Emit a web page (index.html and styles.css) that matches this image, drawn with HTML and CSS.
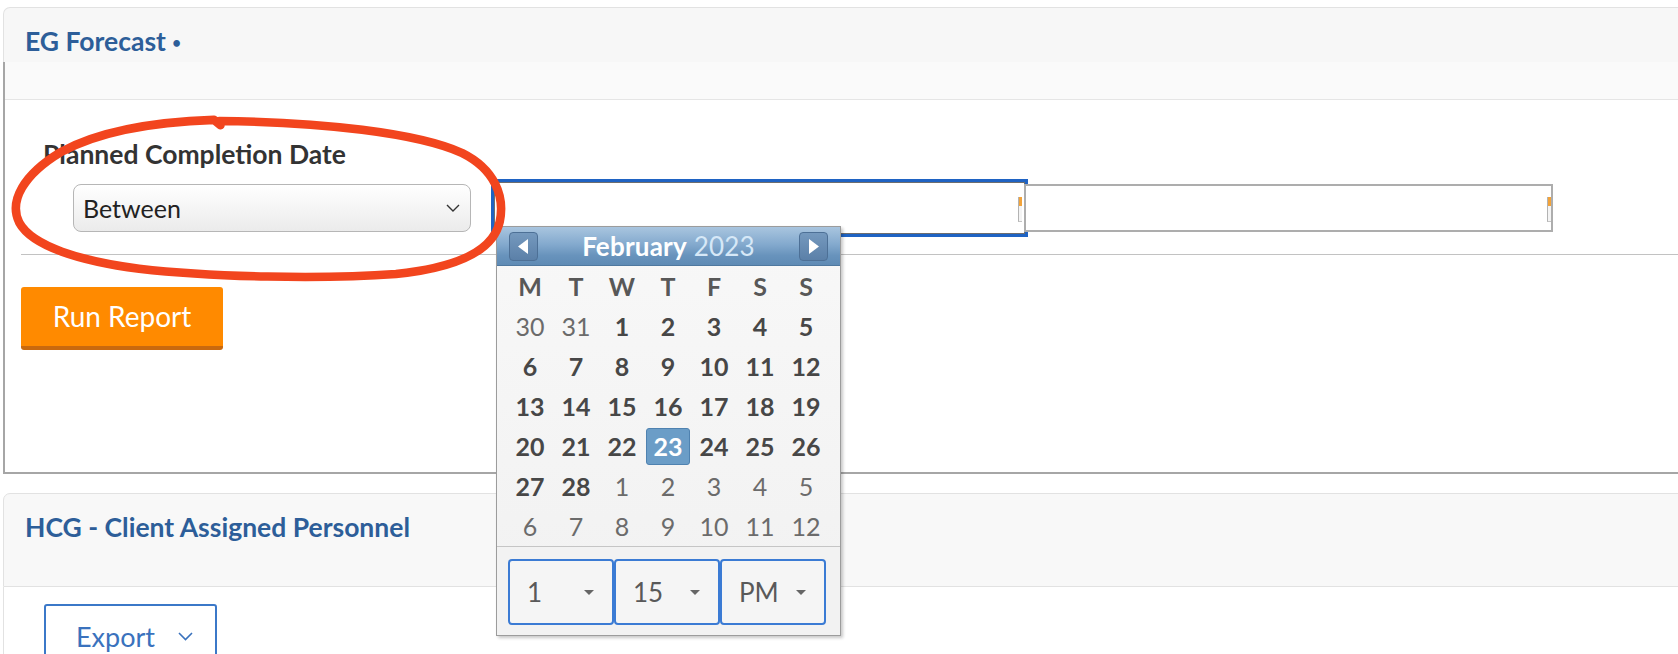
FILE: index.html
```html
<!DOCTYPE html>
<html lang="en">
<head>
<meta charset="utf-8">
<title>EG Forecast</title>
<link rel="stylesheet" href="styles.css">
</head>
<body>
<div class="page">
  <section class="panel">
    <header class="panel-head head-eg"><h2 class="panel-title">EG Forecast <span class="dot">•</span></h2></header>
    <div class="report-body">
      <div class="subbar"></div>
      <div class="filter">
        <div class="filter-label">Planned Completion Date</div>
        <div class="filter-row">
          <div class="select">
            <span>Between</span>
            <svg class="chev" width="14" height="8" viewBox="0 0 14 8"><path d="M1 1 L7 7 L13 1" fill="none" stroke="#333" stroke-width="1.4"/></svg>
          </div>
          <div class="date-wrap">
            <div class="date-input focused"><span class="cal-icon"></span></div>
            <div class="datepicker">
              <div class="dp-head">
                <span class="dp-nav"><svg width="27" height="27" viewBox="0 0 27 27"><polygon points="18,6 8,13.5 18,21" fill="#fff"/></svg></span>
                <span class="dp-title"><b>February</b> <span class="dp-year">2023</span></span>
                <span class="dp-nav"><svg width="27" height="27" viewBox="0 0 27 27"><polygon points="9,6 19,13.5 9,21" fill="#fff"/></svg></span>
              </div>
              <div class="dp-grid">
                <span class="dow">M</span><span class="dow">T</span><span class="dow">W</span><span class="dow">T</span><span class="dow">F</span><span class="dow">S</span><span class="dow">S</span>
                <span class="day other">30</span><span class="day other">31</span><span class="day">1</span><span class="day">2</span><span class="day">3</span><span class="day">4</span><span class="day">5</span>
                <span class="day">6</span><span class="day">7</span><span class="day">8</span><span class="day">9</span><span class="day">10</span><span class="day">11</span><span class="day">12</span>
                <span class="day">13</span><span class="day">14</span><span class="day">15</span><span class="day">16</span><span class="day">17</span><span class="day">18</span><span class="day">19</span>
                <span class="day">20</span><span class="day">21</span><span class="day">22</span><span class="day"><span class="sel">23</span></span><span class="day">24</span><span class="day">25</span><span class="day">26</span>
                <span class="day">27</span><span class="day">28</span><span class="day other">1</span><span class="day other">2</span><span class="day other">3</span><span class="day other">4</span><span class="day other">5</span>
                <span class="day other">6</span><span class="day other">7</span><span class="day other">8</span><span class="day other">9</span><span class="day other">10</span><span class="day other">11</span><span class="day other">12</span>
              </div>
              <div class="dp-time">
                <div class="dp-sel"><span>1</span><i class="caret"></i></div>
                <div class="dp-sel"><span>15</span><i class="caret"></i></div>
                <div class="dp-sel"><span>PM</span><i class="caret"></i></div>
              </div>
            </div>
          </div>
          <div class="date-input second"><span class="cal-icon"></span></div>
        </div>
      </div>
      <div class="divider"></div>
      <button class="btn-run">Run Report</button>
    </div>
  </section>

  <section class="panel panel-two">
    <header class="panel-head head-hcg"><h2 class="panel-title">HCG - Client Assigned Personnel</h2></header>
    <div class="two-body">
      <button class="btn-export"><span>Export</span>
        <svg width="15" height="9" viewBox="0 0 15 9"><path d="M1 1 L7.5 7.5 L14 1" fill="none" stroke="#3a72bd" stroke-width="1.6"/></svg>
      </button>
    </div>
  </section>
</div>

<svg class="annotation" width="1678" height="654" viewBox="0 0 1568 611" preserveAspectRatio="none">
  <path d="M 205 113 C 300 114, 390 124, 432 143 C 462 158, 472 183, 467 207 C 461 234, 428 250, 370 256 C 300 261, 200 259, 130 251 C 75 244, 30 230, 18 208 C 8 188, 22 163, 57 142 C 90 124, 140 114, 200 112 L 206 117" fill="none" stroke="#f2451e" stroke-width="8" stroke-linecap="round" stroke-linejoin="round"/>
</svg>
</body>
</html>
```

FILE: styles.css
```css
html, body {
  margin: 0;
  padding: 0;
  background: #fff;
  overflow: hidden;
}
body {
  width: 1678px;
  height: 654px;
  position: relative;
  font-family: "Lato", "Open Sans", sans-serif;
  color: #333;
}
.page {
  padding: 7px 0 0 3px;
}
.panel {
  width: 1720px;
}
.panel-head {
  box-sizing: border-box;
  background: #f7f7f7;
  border: 1px solid #e2e2e2;
  border-bottom: 0;
  border-radius: 7px 7px 0 0;
}
.head-eg {
  height: 55px;
  padding: 19px 0 0 21px;
}
.panel-title {
  margin: 0;
  font-size: 26.5px;
  line-height: 28px;
  font-weight: 700;
  color: #2d5e99;
}
.dot {
  font-size: 15px;
  vertical-align: 3px;
}
.report-body {
  box-sizing: border-box;
  height: 412px;
  border-left: 2px solid #a6a6a6;
  border-bottom: 2px solid #a6a6a6;
  background: #fff;
}
.subbar {
  height: 37px;
  background: #fafafa;
  border-bottom: 1px solid #e5e5e5;
}
.filter {
  padding: 40px 0 0 38px;
}
.filter-label {
  font-size: 26.5px;
  line-height: 28px;
  font-weight: 700;
  color: #333;
}
.filter-row {
  display: flex;
  align-items: center;
  margin-top: 14px;
}
.select {
  box-sizing: border-box;
  width: 398px;
  height: 48px;
  margin-left: 30px;
  padding: 0 10px 0 9px;
  display: flex;
  align-items: center;
  justify-content: space-between;
  border: 1px solid #b6b6b6;
  border-radius: 8px;
  background: linear-gradient(#ffffff, #ebebeb);
  font-size: 25px;
  color: #222;
}
.date-wrap {
  position: relative;
  margin-left: 23px;
}
.date-input {
  box-sizing: border-box;
  display: flex;
  align-items: center;
  justify-content: flex-end;
  background: #fff;
}
.date-input.focused {
  width: 531px;
  height: 52px;
  border: 1px solid #6e6e6e;
  box-shadow: 0 0 0 3px #1f63c3;
  padding-right: 2px;
}
.date-input.second {
  position: relative;
  width: 529px;
  height: 48px;
  margin-left: -1px;
  border: 2px solid #adadad;
  padding-right: 0;
}
.cal-icon {
  box-sizing: border-box;
  width: 4px;
  height: 25px;
  margin-top: 2px;
  border-left: 1px solid #b3b3b3;
  border-bottom: 1px solid #c4c4c4;
  background: linear-gradient(#f2a33a 0, #f2a33a 9px, #f4f4f4 9px);
}
.datepicker {
  position: absolute;
  left: 2px;
  top: 44px;
  z-index: 5;
  box-sizing: border-box;
  width: 345px;
  height: 410px;
  border: 1px solid #9c9c9c;
  background: linear-gradient(#f8f8f8, #f1f1f1);
  box-shadow: 2px 2px 3px rgba(0, 0, 0, 0.22);
}
.dp-head {
  box-sizing: border-box;
  height: 39px;
  padding: 0 12px;
  display: flex;
  align-items: center;
  justify-content: space-between;
  background: linear-gradient(#a9c5df 0%, #84aace 45%, #6893bc 75%, #5f8bb5 100%);
  border-bottom: 1px solid #4f789f;
}
.dp-nav {
  box-sizing: border-box;
  width: 29px;
  height: 29px;
  display: flex;
  align-items: center;
  justify-content: center;
  border: 1px solid #4d7096;
  border-radius: 4px;
  background: linear-gradient(#7599be, #5b80a8);
}
.dp-title {
  font-size: 26px;
  line-height: 30px;
  letter-spacing: 0.2px;
  color: #fff;
}
.dp-title b {
  font-weight: 700;
}
.dp-year {
  color: #d6e8f7;
}
.dp-grid {
  display: grid;
  grid-template-columns: repeat(7, 46px);
  grid-auto-rows: 40px;
  padding: 0 11px 0 10px;
}
.dow, .day {
  display: flex;
  align-items: center;
  justify-content: center;
  font-size: 25px;
}
.dow {
  font-weight: 700;
  color: #585858;
}
.day {
  font-weight: 700;
  color: #474747;
}
.day.other {
  font-weight: 400;
  color: #6b6b6b;
}
.sel {
  box-sizing: border-box;
  width: 44px;
  height: 37px;
  display: flex;
  align-items: center;
  justify-content: center;
  background: #6b9dc7;
  border: 1px solid #4f82b0;
  border-radius: 3px;
  color: #fff;
}
.dp-time {
  box-sizing: border-box;
  height: 89px;
  border-top: 1px solid #c5c5c5;
  padding: 12px 0 0 11px;
  display: flex;
  background: #f2f2f2;
}
.dp-sel {
  box-sizing: border-box;
  width: 106px;
  height: 66px;
  padding: 0 18px 0 17px;
  display: flex;
  align-items: center;
  justify-content: space-between;
  border: 2px solid #3b7bd4;
  border-radius: 4px;
  background: #f5f5f5;
  font-size: 26px;
  color: #595959;
}
.caret {
  width: 0;
  height: 0;
  border-left: 5px solid transparent;
  border-right: 5px solid transparent;
  border-top: 5px solid #666;
}
.divider {
  height: 1px;
  margin: 20px 0 0 16px;
  background: #c2c2c2;
}
.btn-run {
  box-sizing: border-box;
  display: block;
  width: 202px;
  height: 63px;
  margin: 32px 0 0 16px;
  padding: 0 0 2px;
  border: 0;
  border-bottom: 4px solid #c9690e;
  border-radius: 3px;
  background: #ff8a00;
  color: #fff;
  font-family: inherit;
  font-size: 28px;
}
.panel-two {
  margin-top: 19px;
}
.head-hcg {
  height: 94px;
  padding: 19px 0 0 21px;
  border-bottom: 1px solid #e2e2e2;
  background: #f8f8f8;
}
.two-body {
  padding: 17px 0 0 40px;
  border-left: 1px solid #e2e2e2;
  height: 200px;
}
.btn-export {
  box-sizing: border-box;
  display: flex;
  align-items: center;
  justify-content: space-between;
  width: 173px;
  height: 64px;
  padding: 0 22px 0 30px;
  border: 2px solid #3b78c8;
  border-radius: 3px;
  background: #fff;
  color: #3a72bd;
  font-family: inherit;
  font-size: 27px;
}
.annotation {
  position: absolute;
  left: 0;
  top: 0;
  z-index: 10;
  pointer-events: none;
}
```
